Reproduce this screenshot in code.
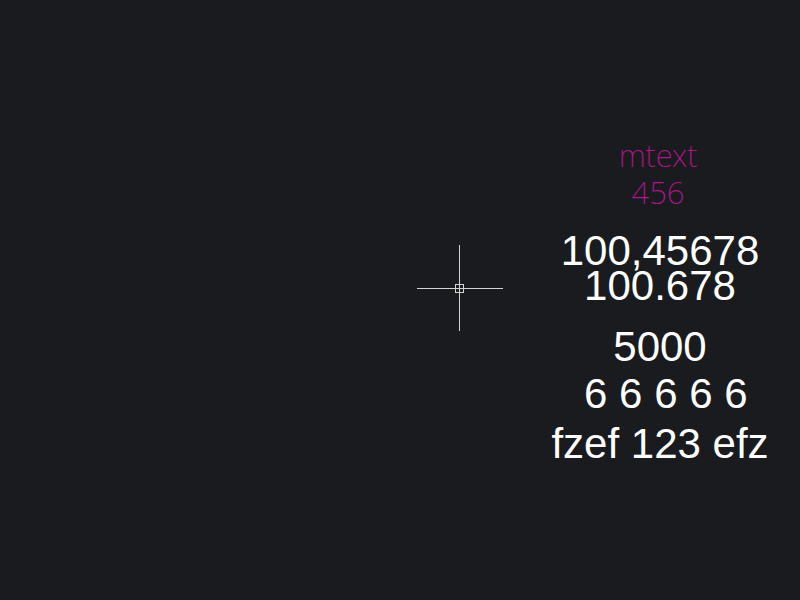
const WHITE_LINES = [
  { text: '100,45678', top: 234 },
  { text: '100.678', top: 269 },
  { text: '5000', top: 330 },
  { text: '\u00a06 6 6 6 6', top: 377 },
  { text: 'fzef 123 efz', top: 427 },
] as const;

function Crosshair() {
  return (
    <svg
      className="absolute left-[416px] top-[244px]"
      width="88"
      height="88"
      viewBox="0 0 88 88"
      shapeRendering="crispEdges"
    >
      <g stroke="#d4d4d4" strokeWidth="1" fill="none">
        <line x1="43.5" y1="1" x2="43.5" y2="87" />
        <line x1="1" y1="44.5" x2="87" y2="44.5" />
        <rect x="39.5" y="40.5" width="8" height="8" />
      </g>
    </svg>
  );
}

export default function App() {
  return (
    <div className="relative h-[600px] w-[800px] overflow-hidden bg-[#1a1b1f]">
      {/* magenta mtext block */}
      <div
        className="absolute left-[558px] top-[140px] w-[200px] text-center text-[31px] leading-[30px] font-extralight text-[#b3148e]"
        style={{ fontFamily: '"Noto Sans", sans-serif' }}
      >
        <div>mtext</div>
        <div className="mt-[7px]">456</div>
      </div>

      {/* white text entities */}
      {WHITE_LINES.map((line) => (
        <div
          key={line.text}
          className="absolute left-[510px] w-[300px] text-center text-[42px] leading-[34px] whitespace-pre text-white"
          style={{ top: line.top, fontFamily: '"Liberation Sans", Arial, sans-serif' }}
        >
          {line.text}
        </div>
      ))}

      <Crosshair />
    </div>
  );
}
